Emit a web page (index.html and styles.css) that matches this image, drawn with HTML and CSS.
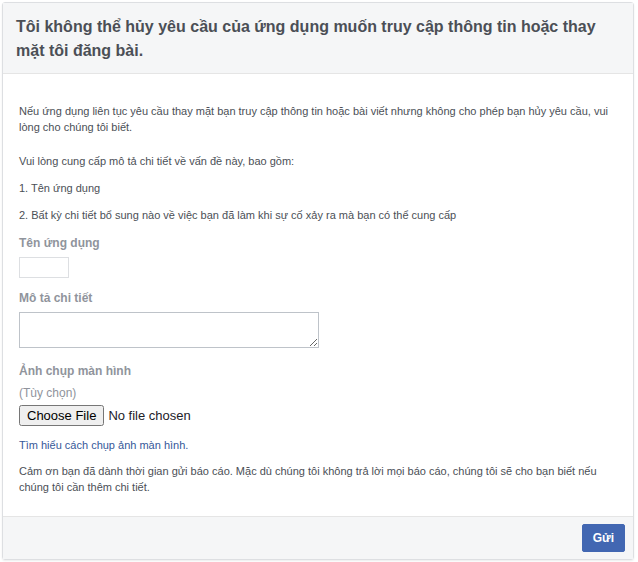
FILE: index.html
```html
<!DOCTYPE html>
<html lang="vi">
<head>
<meta charset="utf-8">
<link rel="stylesheet" href="styles.css">
</head>
<body>
<div class="dialog">
  <div class="header">
    <h1 class="title">Tôi không thể hủy yêu cầu của ứng dụng muốn truy cập thông tin hoặc thay mặt tôi đăng bài.</h1>
  </div>
  <div class="content">
    <p class="para">Nếu ứng dụng liên tục yêu cầu thay mặt bạn truy cập thông tin hoặc bài viết nhưng không cho phép bạn hủy yêu cầu, vui lòng cho chúng tôi biết.</p>
    <p class="para gap">Vui lòng cung cấp mô tả chi tiết về vấn đề này, bao gồm:</p>
    <p class="para small-gap">1. Tên ứng dụng</p>
    <p class="para small-gap">2. Bất kỳ chi tiết bổ sung nào về việc bạn đã làm khi sự cố xảy ra mà bạn có thể cung cấp</p>
    <div class="field">
      <label class="label">Tên ứng dụng</label>
      <input class="text-input" type="text">
    </div>
    <div class="field">
      <label class="label">Mô tả chi tiết</label>
      <textarea class="textarea"></textarea>
    </div>
    <div class="field field-shot">
      <label class="label">Ảnh chụp màn hình</label>
      <div class="optional">(Tùy chọn)</div>
      <input class="file" type="file">
    </div>
    <a class="link" href="#">Tìm hiểu cách chụp ảnh màn hình.</a>
    <p class="para thanks">Cảm ơn bạn đã dành thời gian gửi báo cáo. Mặc dù chúng tôi không trả lời mọi báo cáo, chúng tôi sẽ cho bạn biết nếu chúng tôi cần thêm chi tiết.</p>
  </div>
  <div class="footer">
    <button class="btn">Gửi</button>
  </div>
</div>
</body>
</html>
```
FILE: styles.css
```css
html, body {
  margin: 0;
  padding: 0;
  background: #fff;
}
body {
  padding: 2px 4px 2px 2px;
  font-family: "Liberation Sans", Arial, sans-serif;
  color: #4b4f56;
}
.dialog {
  border: 1px solid #dddfe2;
  border-radius: 3px;
  width: 632px;
  box-sizing: border-box;
  box-shadow: 0 1px 2px rgba(0,0,0,0.08);
}
.header {
  background: #f5f6f7;
  border-bottom: 1px solid #e5e5e5;
  padding: 12px 16px 9px 13px;
  height: 71px;
  box-sizing: border-box;
}
.title {
  margin: 0;
  font-size: 16px;
  line-height: 24px;
  font-weight: bold;
  color: #4b4f56;
}
.content {
  padding: 29px 18px 21px 16px;
  font-size: 11px;
  line-height: 16px;
  color: #4b4f56;
}
.para {
  margin: 0;
}
.gap {
  margin-top: 18px;
}
.small-gap {
  margin-top: 11px;
}
.field {
  display: flex;
  flex-direction: column;
  align-items: flex-start;
  margin-top: 12px;
}
.field-shot {
  margin-top: 15px;
}
.label {
  font-weight: bold;
  color: #90949c;
  font-size: 12px;
  line-height: 16px;
  margin-bottom: 6px;
}
.text-input {
  width: 50px;
  height: 21px;
  box-sizing: border-box;
  border: 1px solid #dddfe2;
  margin: 0;
}
.textarea {
  width: 300px;
  height: 36px;
  box-sizing: border-box;
  border: 1px solid #bec3c9;
  margin: 0;
  resize: both;
}
.optional {
  color: #90949c;
  font-size: 12px;
  margin: 0 0 4px;
}
.file {
  font-family: "Liberation Sans", Arial, sans-serif;
  font-size: 13px;
  color: #1d2129;
  margin: 0;
}
.link {
  display: block;
  margin-top: 11px;
  color: #365899;
  text-decoration: none;
}
.thanks {
  margin-top: 10px;
}
.footer {
  background: #f5f6f7;
  border-top: 1px solid #e5e5e5;
  height: 43px;
  box-sizing: border-box;
  display: flex;
  justify-content: flex-end;
  align-items: center;
  padding: 0 8px;
}
.btn {
  background: #4267b2;
  border: 1px solid #4267b2;
  color: #fff;
  font-family: "Liberation Sans", Arial, sans-serif;
  font-weight: bold;
  font-size: 12px;
  height: 28px;
  padding: 0 10px;
  border-radius: 2px;
}
```
